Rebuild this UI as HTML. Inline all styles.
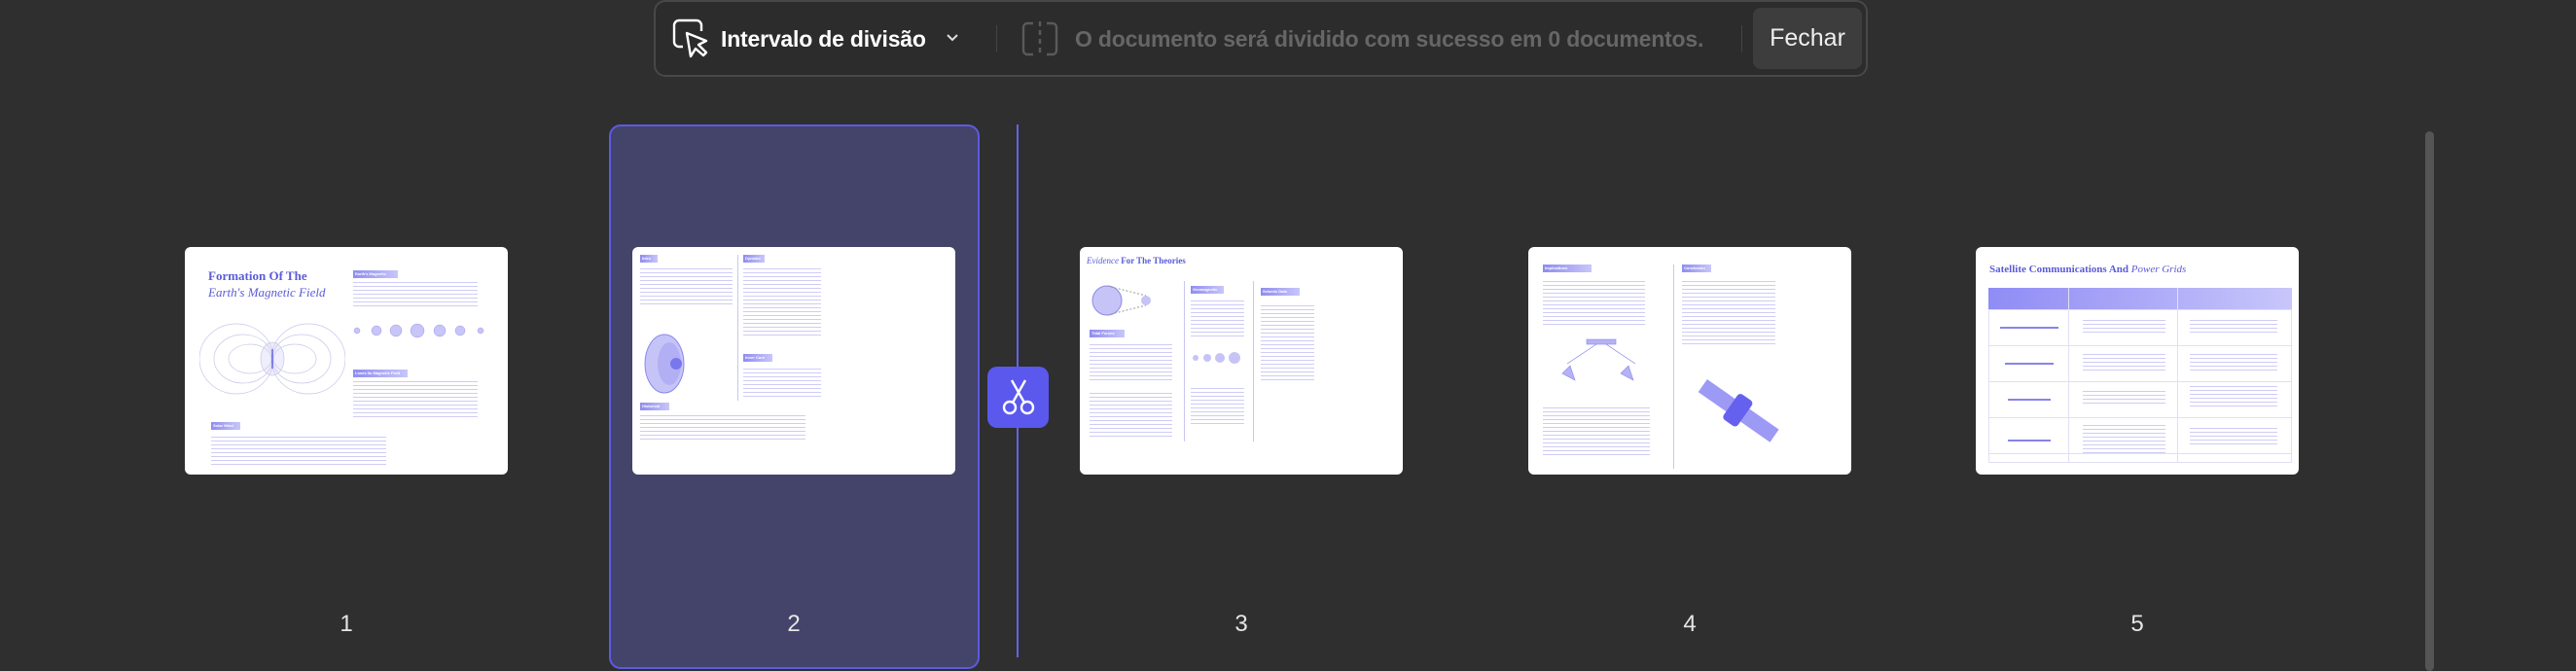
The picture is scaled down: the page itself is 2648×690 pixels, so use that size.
<!DOCTYPE html>
<html><head><meta charset="utf-8"><style>
*{margin:0;padding:0;box-sizing:border-box}
body{width:2648px;height:690px;background:#2f2f2f;position:relative;overflow:hidden;font-family:"Liberation Sans",sans-serif}
.abs{position:absolute}
.tb{left:672px;top:0;width:1248px;height:79px;border:2px solid #484848;border-radius:12px;background:#2c2c2c}
.pg{position:absolute;top:254px;width:332px;height:234px;background:#fff;border-radius:6px;overflow:hidden}
.tx{position:absolute;background:repeating-linear-gradient(#cfccf6 0 1.2px,transparent 1.2px 4px)}
.hd{position:absolute;height:8px;background:linear-gradient(90deg,#8f8cf0,#c8c6fa);color:#fff;font-size:4px;line-height:8px;padding-left:2px;font-weight:bold}
.num{position:absolute;top:628px;width:60px;text-align:center;color:#e6e6e6;font-size:24px}
.vl{position:absolute;width:1px;background:#c9c7f0}
.ttl{position:absolute;font-family:"Liberation Serif",serif;color:#5b5bd8;font-weight:bold}
</style></head><body>
<div class="abs tb"></div>
<svg class="abs" style="left:690px;top:18px" width="42" height="46" viewBox="0 0 42 46" fill="none" stroke="#fff" stroke-width="2.4" stroke-linejoin="round"><path d="M12 30H8a5 5 0 0 1-5-5V8a5 5 0 0 1 5-5h18a5 5 0 0 1 5 5v6"/><path d="M16 16l4 24 5-8 8 7 3-3-8-8 8-4z"/></svg>
<div class="abs" style="left:741px;top:27px;color:#fff;font-size:23px;font-weight:bold;letter-spacing:-0.2px">Intervalo de divisão</div>
<svg class="abs" style="left:971px;top:33px" width="16" height="12" viewBox="0 0 16 12" fill="none" stroke="#ddd" stroke-width="2"><path d="M3 3l5 5 5-5"/></svg>
<div class="abs" style="left:1024px;top:26px;width:1px;height:28px;background:#444"></div>
<svg class="abs" style="left:1048px;top:20px" width="42" height="40" viewBox="0 0 42 40" fill="none" stroke="#5a5a5a" stroke-width="2.4"><path d="M14 4H8a4 4 0 0 0-4 4v24a4 4 0 0 0 4 4h6M28 4h6a4 4 0 0 1 4 4v24a4 4 0 0 1-4 4h-6"/><path d="M21 2v36" stroke-dasharray="5 4"/></svg>
<div class="abs" style="left:1105px;top:27px;color:#666;font-size:23px;font-weight:bold;letter-spacing:-0.2px">O documento será dividido com sucesso em 0 documentos.</div>
<div class="abs" style="left:1790px;top:26px;width:1px;height:28px;background:#444"></div>
<div class="abs" style="left:1802px;top:8px;width:112px;height:63px;background:#3d3d3d;border-radius:8px;color:#eee;font-size:25px;text-align:center;line-height:63px">Fechar</div>

<div class="abs" style="left:626px;top:128px;width:381px;height:560px;background:#44446a;border:2px solid #5d5be0;border-radius:12px"></div>
<div class="abs" style="left:1045px;top:128px;width:2px;height:548px;background:#6563e6"></div>
<div class="abs" style="left:1015px;top:377px;width:63px;height:63px;background:#5b58ee;border-radius:10px"></div>
<svg class="abs" style="left:1028px;top:388px" width="38" height="42" viewBox="0 0 38 42" fill="none" stroke="#fff" stroke-width="2.4"><circle cx="10" cy="31" r="6"/><circle cx="28" cy="31" r="6"/><path d="M13 26L26 3M25 26L12 3"/></svg>
<div class="abs" style="left:2493px;top:135px;width:9px;height:555px;background:#555;border-radius:5px"></div>

<div class="pg" style="left:190px">
 <div class="ttl" style="left:24px;top:22px;font-size:13px">Formation Of The</div>
 <div class="ttl" style="left:24px;top:39px;font-size:13px;font-style:italic;font-weight:normal">Earth's Magnetic Field</div>
 <svg class="abs" style="left:15px;top:65px" width="150" height="100" viewBox="0 0 150 100" fill="none" stroke="#c9c6e6" stroke-width=".7"><ellipse cx="75" cy="50" rx="12" ry="17" fill="#eeeefc"/><ellipse cx="45" cy="50" rx="30" ry="25"/><ellipse cx="105" cy="50" rx="30" ry="25"/><ellipse cx="38" cy="50" rx="38" ry="36"/><ellipse cx="112" cy="50" rx="38" ry="36"/><ellipse cx="52" cy="50" rx="22" ry="15"/><ellipse cx="98" cy="50" rx="22" ry="15"/><path d="M75 40v20" stroke="#6a66e6" stroke-width="1.5"/></svg>
 <div class="hd" style="left:173px;top:24px;width:46px">Earth's Magnetic</div>
 <div class="tx" style="left:173px;top:36px;width:128px;height:28px"></div>
 <svg class="abs" style="left:170px;top:76px" width="140" height="36"><g fill="#c8c5f7" stroke="#9d9af0" stroke-width=".5"><circle cx="7" cy="10" r="3"/><circle cx="27" cy="10" r="5"/><circle cx="47" cy="10" r="6"/><circle cx="69" cy="10" r="7"/><circle cx="92" cy="10" r="6"/><circle cx="113" cy="10" r="5"/><circle cx="134" cy="10" r="3"/></g></svg>
 <div class="hd" style="left:173px;top:126px;width:56px">Loses Its Magnetic Field</div>
 <div class="tx" style="left:173px;top:138px;width:128px;height:38px"></div>
 <div class="hd" style="left:27px;top:180px;width:30px">Solar Wind</div>
 <div class="tx" style="left:27px;top:195px;width:180px;height:30px"></div>
</div>
<div class="pg" style="left:650px">
 <div class="hd" style="left:8px;top:8px;width:18px">Intro</div>
 <div class="tx" style="left:8px;top:22px;width:95px;height:40px"></div>
 <svg class="abs" style="left:8px;top:82px" width="70" height="70"><ellipse cx="25" cy="38" rx="20" ry="30" fill="#c6c4f7" stroke="#8c88ee"/><ellipse cx="30" cy="38" rx="12" ry="22" fill="#b2aff5"/><circle cx="37" cy="38" r="6" fill="#7a76ee"/></svg>
 <div class="vl" style="left:108px;top:8px;height:150px"></div>
 <div class="hd" style="left:114px;top:8px;width:22px">Dynamo</div>
 <div class="tx" style="left:114px;top:22px;width:80px;height:70px"></div>
 <div class="hd" style="left:114px;top:110px;width:30px">Inner Core</div>
 <div class="tx" style="left:114px;top:125px;width:80px;height:30px"></div>
 <div class="hd" style="left:8px;top:160px;width:30px">Historical</div>
 <div class="tx" style="left:8px;top:173px;width:170px;height:28px"></div>
</div>
<div class="pg" style="left:1110px">
 <div class="ttl" style="left:7px;top:9px;font-size:9px"><i style="font-weight:normal">Evidence</i> For The Theories</div>
 <svg class="abs" style="left:8px;top:35px" width="70" height="40"><circle cx="20" cy="20" r="15" fill="#c6c4f7" stroke="#8c88ee"/><circle cx="60" cy="20" r="5" fill="#c6c4f7"/><path d="M20 5L60 15M20 35L60 25" stroke="#999" stroke-dasharray="2 2"/></svg>
 <div class="vl" style="left:107px;top:35px;height:165px"></div>
 <div class="vl" style="left:178px;top:35px;height:165px"></div>
 <div class="hd" style="left:114px;top:40px;width:34px">Geomagnetic</div>
 <div class="tx" style="left:114px;top:55px;width:55px;height:40px"></div>
 <svg class="abs" style="left:114px;top:104px" width="55" height="20" fill="#c6c4f7"><circle cx="5" cy="10" r="3"/><circle cx="17" cy="10" r="4"/><circle cx="30" cy="10" r="5"/><circle cx="45" cy="10" r="6"/></svg>
 <div class="tx" style="left:114px;top:145px;width:55px;height:40px"></div>
 <div class="hd" style="left:186px;top:42px;width:40px">Seismic Data</div>
 <div class="tx" style="left:186px;top:60px;width:55px;height:80px"></div>
 <div class="hd" style="left:10px;top:85px;width:36px">Tidal Forces</div>
 <div class="tx" style="left:10px;top:100px;width:85px;height:40px"></div>
 <div class="tx" style="left:10px;top:150px;width:85px;height:45px"></div>
</div>
<div class="pg" style="left:1571px">
 <div class="hd" style="left:15px;top:18px;width:50px">Implications</div>
 <div class="tx" style="left:15px;top:35px;width:105px;height:45px"></div>
 <svg class="abs" style="left:25px;top:90px" width="100" height="60" fill="#b5b2f5" stroke="#8a86ee" stroke-width=".6"><rect x="35" y="5" width="30" height="5"/><path d="M10 40l8-8 5 15zM70 40l8-8 5 15z"/><path d="M15 30L45 10M85 30L55 10" stroke="#7a76ee"/></svg>
 <div class="tx" style="left:15px;top:165px;width:110px;height:52px"></div>
 <div class="vl" style="left:149px;top:18px;height:210px"></div>
 <div class="hd" style="left:158px;top:18px;width:30px">Conclusion</div>
 <div class="tx" style="left:158px;top:35px;width:96px;height:68px"></div>
 <svg class="abs" style="left:165px;top:130px" width="100" height="80"><g transform="rotate(35 50 40)"><rect x="5" y="30" width="90" height="16" fill="#9d9af5"/><rect x="40" y="22" width="18" height="32" rx="4" fill="#6561ee"/></g></svg>
</div>
<div class="pg" style="left:2031px">
 <div class="ttl" style="left:14px;top:17px;font-size:11px">Satellite Communications And <i style="font-weight:normal">Power Grids</i></div>
 <div class="abs" style="left:13px;top:42px;width:312px;height:22px;background:linear-gradient(90deg,#8f8cf5,#c8c6fa)"></div>
 <div class="abs" style="left:13px;top:64px;width:312px;height:158px;border:1px solid #e1e0f2;background:repeating-linear-gradient(#fff 0 36px,#e1e0f2 36px 37px)"></div>
 <div class="vl" style="left:95px;top:42px;height:180px;background:#e1e0f2"></div>
 <div class="vl" style="left:207px;top:42px;height:180px;background:#e1e0f2"></div>
 <div class="tx" style="left:110px;top:75px;width:85px;height:14px"></div>
 <div class="tx" style="left:220px;top:75px;width:90px;height:14px"></div>
 <div class="tx" style="left:110px;top:110px;width:85px;height:18px"></div>
 <div class="tx" style="left:220px;top:110px;width:90px;height:18px"></div>
 <div class="tx" style="left:110px;top:148px;width:85px;height:14px"></div>
 <div class="tx" style="left:220px;top:143px;width:90px;height:22px"></div>
 <div class="tx" style="left:110px;top:183px;width:85px;height:30px"></div>
 <div class="tx" style="left:220px;top:186px;width:90px;height:18px"></div>
 <div class="tx" style="left:25px;top:82px;width:60px;height:2px;background:#8884e8"></div>
 <div class="tx" style="left:30px;top:119px;width:50px;height:2px;background:#8884e8"></div>
 <div class="tx" style="left:33px;top:156px;width:44px;height:2px;background:#8884e8"></div>
 <div class="tx" style="left:33px;top:198px;width:44px;height:2px;background:#8884e8"></div>
</div>

<div class="num" style="left:326px">1</div>
<div class="num" style="left:786px">2</div>
<div class="num" style="left:1246px">3</div>
<div class="num" style="left:1707px">4</div>
<div class="num" style="left:2167px">5</div>
</body></html>
